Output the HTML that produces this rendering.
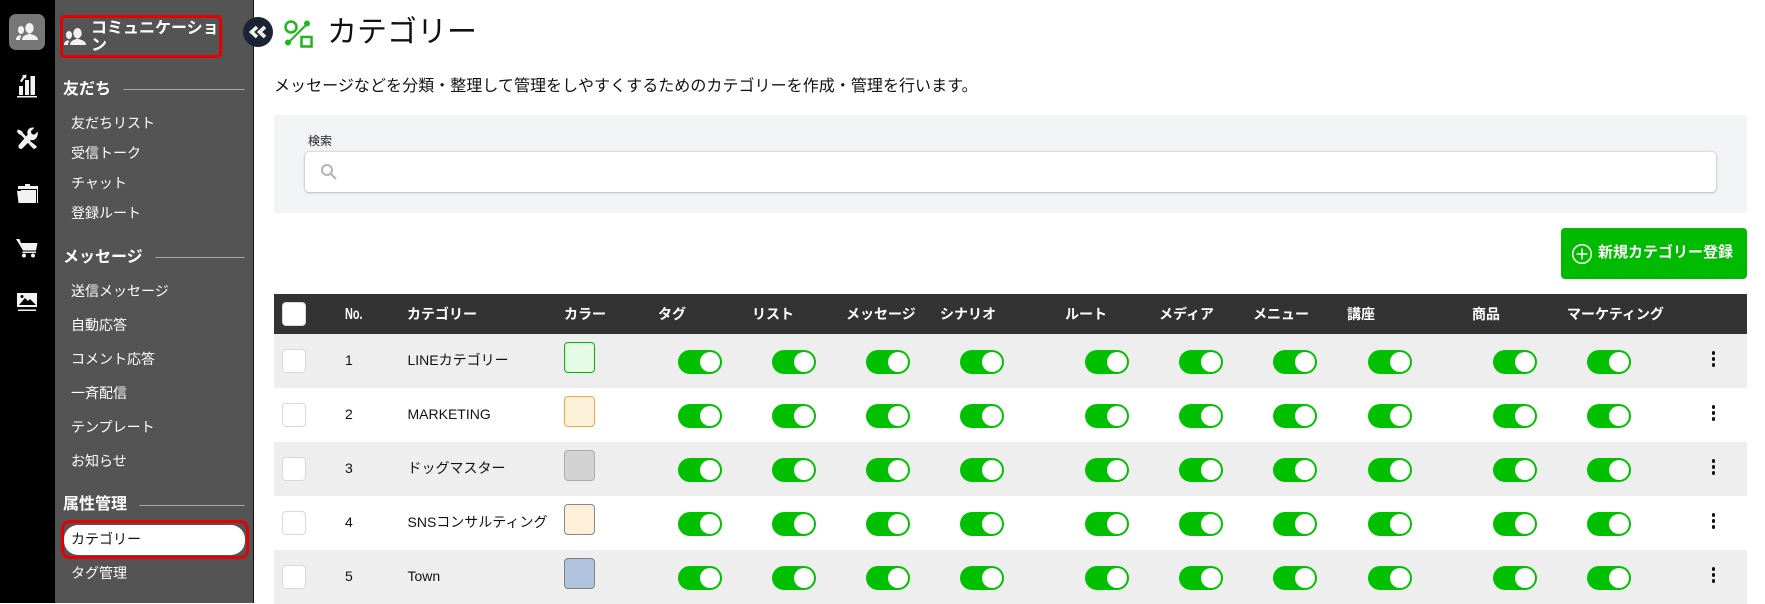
<!DOCTYPE html>
<html lang="ja">
<head>
<meta charset="utf-8">
<title>カテゴリー</title>
<style>
html,body{margin:0;padding:0;background:#fff}
body{position:relative;width:1765px;height:603px;overflow:hidden;font-family:"Liberation Sans","Noto Sans CJK JP",sans-serif;color:#111}
.a{position:absolute}
.t{position:absolute;white-space:nowrap;line-height:20px;height:20px}
.s{color:#fff;font-size:14px}
.h{color:#fff;font-size:16px;font-weight:700}
.l{position:absolute;height:1px;background:#a5a5aa}
.th{color:#fff;font-size:14px;font-weight:700;top:304px}
.row{position:absolute;left:274px;width:1473px;height:54px;background:#fff}
.g{background:#eee}
.cb{position:absolute;left:8px;top:15px;width:22px;height:22px;background:#fff;border:1px solid #d8d8de;border-radius:4px}
.n,.c{position:absolute;top:16px;font-size:14px;line-height:20px;white-space:nowrap;color:#111}
.n{left:71px}.c{left:133.5px}
.sw{position:absolute;left:290px;top:8px;width:29px;height:29px;border:1.5px solid #888;border-radius:4px}
.tg{position:absolute;top:16px;width:44px;height:24px;border-radius:12px;background:#00c000}
.tg::after{content:"";position:absolute;right:2px;top:2px;width:20px;height:20px;border-radius:50%;background:#fff}
.d{position:absolute;left:1437.5px;top:17px;width:3.5px;height:3.5px;border-radius:50%;background:#111;box-shadow:0 6px 0 #111,0 12px 0 #111}
.x1{left:404px}.x2{left:498px}.x3{left:592px}.x4{left:686px}.x5{left:811px}.x6{left:905px}.x7{left:999px}.x8{left:1094px}.x9{left:1219px}.x10{left:1313px}
</style>
</head>
<body>
<div class="a" style="left:0;top:0;width:55px;height:603px;background:#000"></div>
<div class="a" style="left:55px;top:0;width:198px;height:603px;background:#545454"></div>
<div class="a" style="left:253px;top:0;width:1px;height:603px;background:#111"></div>

<div class="a" style="left:9px;top:14px;width:36px;height:36px;border-radius:7px;background:#777"></div>
<svg class="a" style="left:0;top:0" width="55" height="330" viewBox="0 0 55 330">
<g fill="#f2f2f2">
<g transform="translate(16,23)"><ellipse cx="13.500" cy="5.200" rx="4.200" ry="5.200"/><path d="M6 17c0-3 2-4.500 5-5.500l2.500-1 2.500 1c3 1 6 2 6 5.500z"/><ellipse cx="5" cy="7" rx="3" ry="4"/><path d="M0 17c0-3 1.500-4 3.500-4.800l2 .8c-1 1-1.500 2.500-1.500 4z"/></g>
<path d="M19 86h4v9h-4zM25 80h4v15h-4zM30.500 76h4.500v19h-4.500zM17 96h20v1.500H17z"/>
<path d="M20 81l3-4.500-1.300-1L26.500 74.500l-.5 4.300-1.300-1-3 4.500z"/>
<path d="M25 184h5v2h8v17h-1V189H18v-3h7z"/>
<path d="M17 191h4v-1h15v13H18.500z"/>
<path d="M16 239h3.500l1.500 4h16.500l-1.500 7.500H23zM22.500 251.500h13.500v1.500H22.500z"/>
<circle cx="24" cy="255.500" r="2"/><circle cx="33" cy="255.500" r="2"/>
<path d="M17 293h20v14H17zM18 309.500h18v1.500H18z"/>
<path d="M18.500 129.500l-1.800 1.800 2.300 3 1.700.4 4.300 4.500 1.900-1.900-4.300-4.500-.4-1.600z"/>
<path d="M29.500 140.500l-2 2 5.300 5.800c1.200 1.200 3.900.4 3.900-2z"/>
<path d="M37.800 131.500l-3.500 3.200-2.700-.8-.7-2.700 3.400-3.400c-2.800-.8-6.300.4-6.900 3.900-.2 1.100 0 2.100.3 2.900L19 144.800c-1.400 1.400-.2 4.700 2.900 4.100l8.900-8.900c3.600 1 7.500-1.900 7-8.500z"/>
</g>
<path d="M19 305l6-7 3 3 2-2 6 6z" fill="#000"/><circle cx="22" cy="296.500" r="1.500" fill="#000"/>
</svg>

<div class="a" style="left:60px;top:15px;width:156px;height:37px;border:3px solid #e60000;border-radius:5px"></div>
<svg class="a" style="left:64px;top:28px" width="22" height="17" viewBox="0 0 22 17" fill="#f2f2f2"><ellipse cx="13.500" cy="5.200" rx="4.200" ry="5.200"/><path d="M6 17c0-3 2-4.500 5-5.500l2.500-1 2.500 1c3 1 6 2 6 5.500z"/><ellipse cx="5" cy="7" rx="3" ry="4"/><path d="M0 17c0-3 1.500-4 3.500-4.800l2 .8c-1 1-1.500 2.500-1.500 4z"/></svg>
<div class="a h" style="left:91px;top:20px;width:135px;line-height:17px;white-space:nowrap">コミュニケーショ<br>ン</div>

<div class="a" style="left:243px;top:17px;width:30px;height:30px;border-radius:50%;background:#1b2433"></div>
<svg class="a" style="left:243px;top:17px" width="30" height="30" viewBox="0 0 30 30" fill="none" stroke="#f0f0f0" stroke-width="3.600"><path d="M14 10l-5.500 5 5.500 5M22 10l-5.500 5 5.500 5"/></svg>

<div class="t h" style="left:63px;top:80px">友だち</div><div class="l" style="left:123px;top:89px;width:122px"></div>
<div class="t s" style="left:71px;top:113px">友だちリスト</div>
<div class="t s" style="left:71px;top:143px">受信トーク</div>
<div class="t s" style="left:71px;top:173px">チャット</div>
<div class="t s" style="left:71px;top:203px">登録ルート</div>
<div class="t h" style="left:63px;top:248px">メッセージ</div><div class="l" style="left:155px;top:257px;width:90px"></div>
<div class="t s" style="left:71px;top:281px">送信メッセージ</div>
<div class="t s" style="left:71px;top:315px">自動応答</div>
<div class="t s" style="left:71px;top:349px">コメント応答</div>
<div class="t s" style="left:71px;top:383px">一斉配信</div>
<div class="t s" style="left:71px;top:417px">テンプレート</div>
<div class="t s" style="left:71px;top:451px">お知らせ</div>
<div class="t h" style="left:63px;top:495px">属性管理</div><div class="l" style="left:139px;top:505px;width:106px"></div>
<div class="a" style="left:61px;top:520px;width:182px;height:33px;border:3px solid #e60000;border-radius:9px"></div>
<div class="a" style="left:64px;top:525px;width:181px;height:30px;border-radius:14px;background:#fff"></div>
<div class="t" style="left:71px;top:529px;font-size:14px;color:#111">カテゴリー</div>
<div class="t s" style="left:71px;top:563px">タグ管理</div>

<svg class="a" style="left:282px;top:16px" width="34" height="34" viewBox="283 16 34 34" fill="none" stroke="#1cb81c" stroke-width="2.500">
<circle cx="292" cy="27" r="5.500"/><rect x="302.500" y="37" width="10" height="9.500"/><path d="M289 43L308 24" stroke-width="2"/>
<circle cx="289" cy="42.500" r="3" fill="#1cb81c" stroke="none"/><circle cx="308" cy="23.500" r="3" fill="#1cb81c" stroke="none"/>
</svg>
<div class="a" style="left:327px;top:11px;font-size:30px;line-height:44px;white-space:nowrap;color:#111">カテゴリー</div>
<div class="t" style="left:274px;top:77px;font-size:16px;letter-spacing:.05px;color:#111">メッセージなどを分類・整理して管理をしやすくするためのカテゴリーを作成・管理を行います。</div>

<div class="a" style="left:274px;top:115px;width:1473px;height:98px;background:#f2f3f5"></div>
<div class="t" style="left:308px;top:131px;font-size:12px;color:#222">検索</div>
<div class="a" style="left:305px;top:152px;width:1411px;height:40px;background:#fff;border-radius:4px;box-shadow:0 0 2px rgba(0,0,0,.25),0 1px 2px rgba(0,0,0,.15)"></div>
<svg class="a" style="left:320px;top:163px" width="18" height="18" viewBox="0 0 18 18" fill="none" stroke="#b4b4b4" stroke-width="2"><circle cx="7" cy="7" r="5"/><path d="M10.500 10.500l5.500 5.500"/></svg>

<div class="a" style="left:1561px;top:228px;width:186px;height:51px;border-radius:4px;background:#00ba00"></div>
<svg class="a" style="left:1571px;top:243px" width="22" height="22" viewBox="0 0 22 22" fill="none" stroke="#fff" stroke-width="1.500"><circle cx="11" cy="11" r="9.300"/><path d="M11 5.500v11M5.500 11h11"/></svg>
<div class="t" style="left:1598px;top:243px;font-size:15px;font-weight:700;color:#fff">新規カテゴリー登録</div>

<div class="a" style="left:274px;top:294px;width:1473px;height:40px;background:#333"></div>
<div class="a" style="left:282px;top:302px;width:22px;height:22px;background:#fff;border:1px solid #d8d8de;border-radius:4px"></div>
<div class="t th" style="left:345px;font-size:13px;transform:scale(.84,1.2);transform-origin:0 50%">No.</div>
<div class="t th" style="left:407px">カテゴリー</div>
<div class="t th" style="left:564px">カラー</div>
<div class="t th" style="left:658px">タグ</div>
<div class="t th" style="left:752px">リスト</div>
<div class="t th" style="left:846px">メッセージ</div>
<div class="t th" style="left:940px">シナリオ</div>
<div class="t th" style="left:1065px">ルート</div>
<div class="t th" style="left:1159px">メディア</div>
<div class="t th" style="left:1253px">メニュー</div>
<div class="t th" style="left:1347px">講座</div>
<div class="t th" style="left:1472px">商品</div>
<div class="t th" style="left:1567px">マーケティング</div>

<div class="row g" style="top:334px"><div class="cb"></div><div class="n">1</div><div class="c">LINEカテゴリー</div><div class="sw" style="background:#e6fbe6;border-color:#00ba00"></div>
<div class="tg x1"></div><div class="tg x2"></div><div class="tg x3"></div><div class="tg x4"></div><div class="tg x5"></div><div class="tg x6"></div><div class="tg x7"></div><div class="tg x8"></div><div class="tg x9"></div><div class="tg x10"></div><div class="d"></div></div>
<div class="row" style="top:388px"><div class="cb"></div><div class="n">2</div><div class="c">MARKETING</div><div class="sw" style="background:#fbf2d9;border-color:#f5a742"></div>
<div class="tg x1"></div><div class="tg x2"></div><div class="tg x3"></div><div class="tg x4"></div><div class="tg x5"></div><div class="tg x6"></div><div class="tg x7"></div><div class="tg x8"></div><div class="tg x9"></div><div class="tg x10"></div><div class="d"></div></div>
<div class="row g" style="top:442px"><div class="cb"></div><div class="n">3</div><div class="c">ドッグマスター</div><div class="sw" style="background:#d3d3d3;border-color:#aaa"></div>
<div class="tg x1"></div><div class="tg x2"></div><div class="tg x3"></div><div class="tg x4"></div><div class="tg x5"></div><div class="tg x6"></div><div class="tg x7"></div><div class="tg x8"></div><div class="tg x9"></div><div class="tg x10"></div><div class="d"></div></div>
<div class="row" style="top:496px"><div class="cb"></div><div class="n">4</div><div class="c">SNSコンサルティング</div><div class="sw" style="background:#feefd8;border-color:#888"></div>
<div class="tg x1"></div><div class="tg x2"></div><div class="tg x3"></div><div class="tg x4"></div><div class="tg x5"></div><div class="tg x6"></div><div class="tg x7"></div><div class="tg x8"></div><div class="tg x9"></div><div class="tg x10"></div><div class="d"></div></div>
<div class="row g" style="top:550px"><div class="cb"></div><div class="n">5</div><div class="c">Town</div><div class="sw" style="background:#b0c4de;border-color:#808080"></div>
<div class="tg x1"></div><div class="tg x2"></div><div class="tg x3"></div><div class="tg x4"></div><div class="tg x5"></div><div class="tg x6"></div><div class="tg x7"></div><div class="tg x8"></div><div class="tg x9"></div><div class="tg x10"></div><div class="d"></div></div>
</body>
</html>
